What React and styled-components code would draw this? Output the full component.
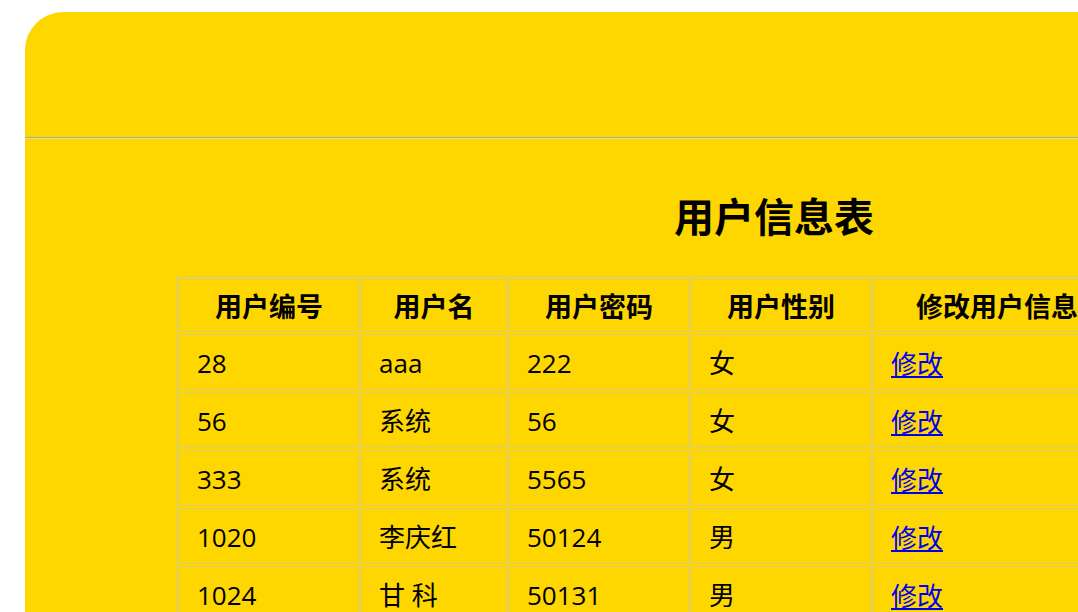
import React from 'react';
import styled, { createGlobalStyle } from 'styled-components';

const Global = createGlobalStyle`
  html, body {
    margin: 0;
    padding: 0;
    background: #fff;
    overflow: hidden;
  }
  body {
    font-family: "Open Sans", "Noto Sans CJK SC", sans-serif;
  }
`;

let Page = styled.div`
  padding: 12px 0 0 25px;
`;

let Panel = styled.div`
  width: 1498px;
  min-height: 620px;
  background: #ffd700;
  border-radius: 38px 0 0 0;
`;

let TopBar = styled.div`
  height: 125px;
  border-bottom: 1px solid #a8a8a8;
  box-shadow: 0 1px 0 #eadb8c;
`;

let Content = styled.div`
  padding: 55px 0 0 151px;
`;

let Title = styled.h1`
  margin: 0 0 39px -151px;
  text-align: center;
  font-size: 40px;
  font-weight: 700;
  line-height: 44px;
  color: #000;
  font-family: "Noto Sans CJK SC", sans-serif;
`;

let UserTable = styled.table`
  border: 1px solid #dacb7c;
  border-collapse: separate;
  border-spacing: 2px;
  font-size: 26px;
  color: #000;
`;

let HeadCell = styled.th`
  box-sizing: border-box;
  width: ${props => props.w}px;
  height: 53px;
  padding: 0;
  border: 1px solid #dacb7c;
  font-size: 27px;
  font-weight: 700;
  line-height: 30px;
  text-align: center;
  vertical-align: middle;
  font-family: "Noto Sans CJK SC", sans-serif;
  white-space: nowrap;
`;

let Cell = styled.td`
  box-sizing: border-box;
  height: 56px;
  padding: 2px 0 0 17px;
  border: 1px solid #dacb7c;
  text-align: left;
  vertical-align: middle;
  white-space: nowrap;
  line-height: 30px;
`;

let EditLink = styled.a`
  color: #0000ee;
  text-decoration: underline;
  font-family: "Noto Sans CJK SC", sans-serif;
`;

const columns = [
  { name: '用户编号', w: 180 },
  { name: '用户名', w: 146 },
  { name: '用户密码', w: 180 },
  { name: '用户性别', w: 180 },
  { name: '修改用户信息', w: 248 },
];

const users = [
  ['28', 'aaa', '222', '女'],
  ['56', '系统', '56', '女'],
  ['333', '系统', '5565', '女'],
  ['1020', '李庆红', '50124', '男'],
  ['1024', '甘 科', '50131', '男'],
];

export default function App() {
  return (
    <Page>
      <Global />
      <Panel>
        <TopBar />
        <Content>
          <Title>用户信息表</Title>
          <UserTable>
            <thead>
              <tr>
                {columns.map(c => <HeadCell key={c.name} w={c.w}>{c.name}</HeadCell>)}
              </tr>
            </thead>
            <tbody>
              {users.map((u, i) => (
                <tr key={i}>
                  {u.map((v, j) => <Cell key={j}>{v}</Cell>)}
                  <Cell><EditLink href="#">修改</EditLink></Cell>
                </tr>
              ))}
            </tbody>
          </UserTable>
        </Content>
      </Panel>
    </Page>
  );
}
